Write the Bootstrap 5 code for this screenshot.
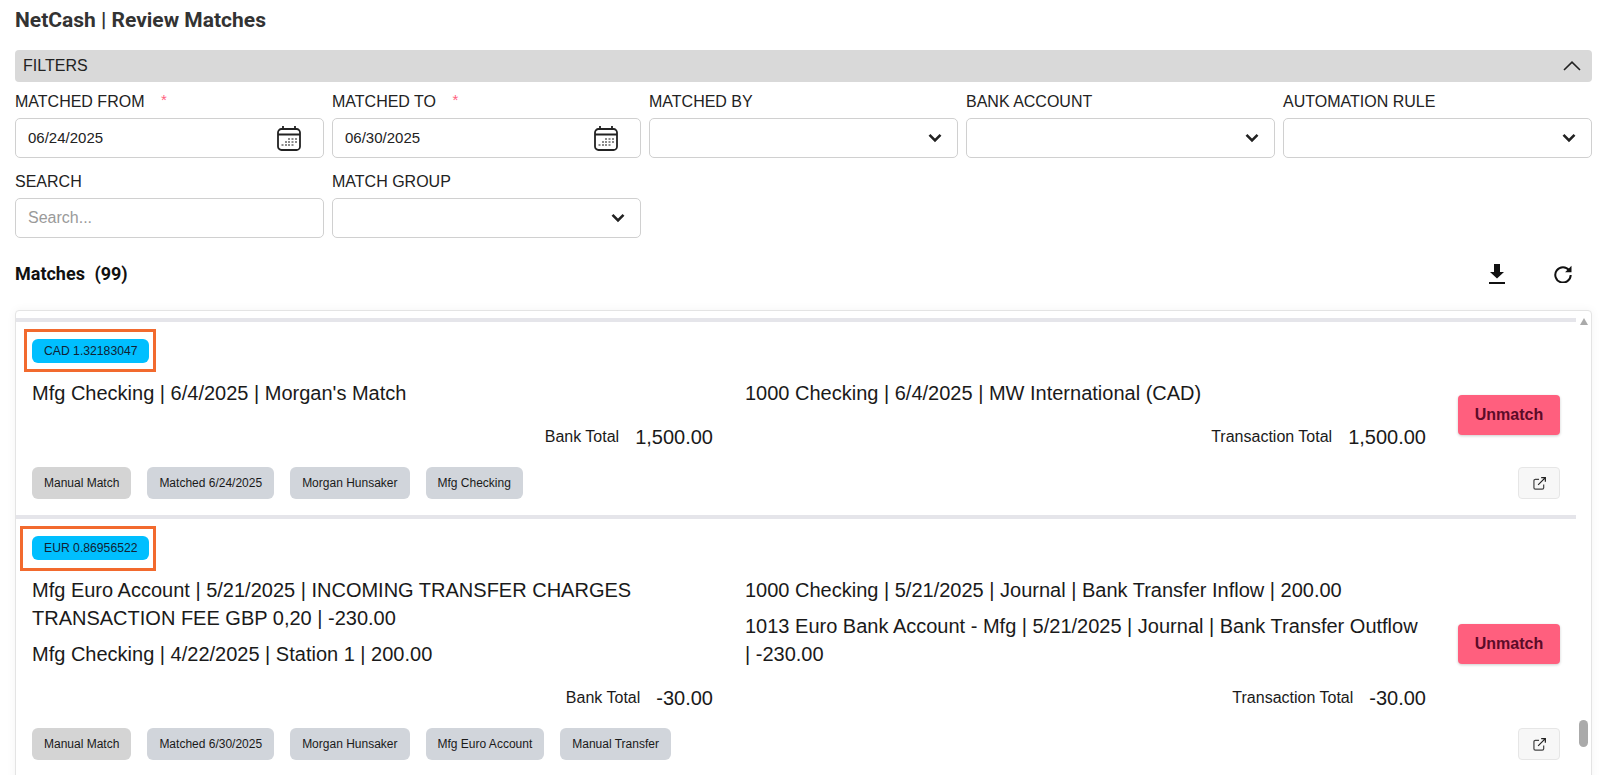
<!DOCTYPE html>
<html lang="en">
<head>
<meta charset="utf-8">
<title>NetCash | Review Matches</title>
<link href="https://cdn.jsdelivr.net/npm/bootstrap@5.3.0/dist/css/bootstrap.min.css" rel="stylesheet">
<style>
html,body{height:100%;overflow:hidden;background:#fff}
body{font-family:"Liberation Sans",Arial,sans-serif;color:#1a1a1a;padding:0 11px 0 15px}
.page-title{font-family:Roboto,"Liberation Sans",sans-serif;font-size:21px;font-weight:700;color:#333;height:40px;line-height:41px;margin:0 0 10px}
.filter-bar{height:32px;background:#d9d9d9;border-radius:4px;padding:0 11px 1px 8px;font-size:16px;color:#222}
.filter-grid{--bs-gutter-y:12px}
.field-label{display:block;font-size:16px;line-height:24px;margin:0 0 4px;color:#222;white-space:nowrap}
.req{color:#ff5f7e;margin-left:12px;font-size:15px;position:relative;top:-2px}
.field-box{position:relative}
.field-input,.field-input:focus{height:40px;border:1px solid #d0d0d0;border-radius:5px;font-size:15px;padding:0 12px 2px;color:#222;box-shadow:none}
.field-input::placeholder{color:#9a9a9a;font-size:16px}
.field-select,.field-select:focus{background-image:url("data:image/svg+xml,%3Csvg xmlns='http://www.w3.org/2000/svg' viewBox='0 0 14 10'%3E%3Cpath d='M1.5 1.8 7 7.5l5.5-5.7' fill='none' stroke='%23222' stroke-width='2.6'/%3E%3C/svg%3E");background-size:14px 10px;background-position:right 15px center}
.cal-icon{position:absolute;right:22px;top:6px;width:26px;height:28px}
.matches-bar{height:36px;margin:18px 0 18px}
.matches-title{font-family:Roboto,"Liberation Sans",sans-serif;font-size:18px;font-weight:700;color:#111;padding-bottom:2px}
.matches-title span{margin-left:5px}
.tool-btn{background:none;border:0;padding:0;line-height:0}
.tool-dl{margin-right:49px}
.tool-rf{margin-right:20px}
.scroll-pane{position:relative;height:600px;border:1px solid #e4e4e4;border-radius:4px;padding:7px 15px 0 0;box-shadow:0 0 10px rgba(0,0,0,.05);background:#fff;overflow:hidden}
.match-item{border-top:4px solid #e5e5ea;padding:17px 16px 16px 16px}
.rate-row{position:relative;height:24px;margin-bottom:16px}
.rate-pill{display:inline-block;width:117px;height:24px;line-height:24px;padding:0 12px;background:#00bfff;border-radius:6px;font-size:12.2px;color:#123;vertical-align:top;white-space:nowrap}
.anno-box{position:absolute;border:3px solid #f26a2e;pointer-events:none}
.anno-a{left:-8px;top:-10px;width:132px;height:43px}
.anno-b{left:-12px;top:-10px;width:136px;height:45px}
.match-body{display:flex;align-items:center;gap:32px;margin-bottom:16px}
.match-cols{flex:1 1 0;min-width:0;display:grid;grid-template-columns:1fr 1fr;column-gap:32px}
.match-col{display:flex;flex-direction:column}
.match-line{font-size:20px;line-height:28px;margin:0 0 8px;color:#1a1a1a}
.total-row{margin-top:auto;padding-top:8px;height:36px;gap:16px;font-size:16px}
.total-row b{font-weight:400;font-size:20px}
.unmatch-btn,.unmatch-btn:hover{width:102px;height:40px;padding:0;background:#ff5f7e;border:0;border-radius:4px;color:#5c0b28;font-weight:700;font-size:16px;box-shadow:0 1px 3px rgba(0,0,0,.2);flex:none}
.chip{display:inline-flex;align-items:center;height:32px;padding:0 12px;border-radius:6px;background:#d1d5db;font-size:12px;color:#1a1a1a;white-space:nowrap}
.chip-first{background:#d4d4d4}
.ext-btn,.ext-btn:hover{width:42px;height:32px;padding:0;display:flex;align-items:center;justify-content:center;background:#f7f7f7;border:1px solid #e6e6e6;border-radius:4px}
.bar-arrow{position:absolute;right:3px;top:7px;width:0;height:0;border-left:4.5px solid transparent;border-right:4.5px solid transparent;border-bottom:7px solid #aaa}
.bar-thumb{position:absolute;right:3px;top:409px;width:9px;height:27px;background:#aaa;border-radius:4.5px}
</style>
</head>
<body>
<h1 class="page-title">NetCash | Review Matches</h1>

<div class="filter-bar d-flex align-items-center justify-content-between">
  <span>FILTERS</span>
  <svg width="18" height="10" viewBox="0 0 18 10"><path d="M1 9 9 1.2 17 9" fill="none" stroke="#222" stroke-width="1.6"/></svg>
</div>

<div class="pt-2">
<div class="row row-cols-5 gx-2 filter-grid">
  <div class="col">
    <label class="field-label">MATCHED FROM <span class="req">*</span></label>
    <div class="field-box">
      <input class="form-control field-input" value="06/24/2025">
      <svg class="cal-icon" viewBox="0 0 26 28"><rect x="2" y="5" width="22" height="21" rx="3.5" fill="none" stroke="#222" stroke-width="1.8"/><path d="M2 10.5h22M7 2v4M19 2v4" fill="none" stroke="#222" stroke-width="1.8"/><path d="M12 15h2M15.500 15h2M19 15h2M9 18h2M12 18h2M15.500 18h2M19 18h2M5.500 21h2M9 21h2M12 21h2M15.500 21h2" stroke="#666" stroke-width="1.6"/></svg>
    </div>
  </div>
  <div class="col">
    <label class="field-label">MATCHED TO <span class="req">*</span></label>
    <div class="field-box">
      <input class="form-control field-input" value="06/30/2025">
      <svg class="cal-icon" viewBox="0 0 26 28"><rect x="2" y="5" width="22" height="21" rx="3.5" fill="none" stroke="#222" stroke-width="1.8"/><path d="M2 10.500h22M7 2v4M19 2v4" fill="none" stroke="#222" stroke-width="1.8"/><path d="M12 15h2M15.500 15h2M19 15h2M9 18h2M12 18h2M15.500 18h2M19 18h2M5.500 21h2M9 21h2M12 21h2M15.500 21h2" stroke="#666" stroke-width="1.6"/></svg>
    </div>
  </div>
  <div class="col">
    <label class="field-label">MATCHED BY</label>
    <select class="form-select field-input field-select"><option></option></select>
  </div>
  <div class="col">
    <label class="field-label">BANK ACCOUNT</label>
    <select class="form-select field-input field-select"><option></option></select>
  </div>
  <div class="col">
    <label class="field-label">AUTOMATION RULE</label>
    <select class="form-select field-input field-select"><option></option></select>
  </div>
  <div class="col">
    <label class="field-label">SEARCH</label>
    <input class="form-control field-input" placeholder="Search...">
  </div>
  <div class="col">
    <label class="field-label">MATCH GROUP</label>
    <select class="form-select field-input field-select"><option></option></select>
  </div>
</div>
</div>

<div class="matches-bar d-flex align-items-center justify-content-between">
  <div class="matches-title">Matches <span>(99)</span></div>
  <div class="d-flex align-items-center">
    <button class="tool-btn tool-dl" type="button" aria-label="Download">
      <svg width="16" height="20" viewBox="0 0 16 20"><path d="M5 0h6v8h4l-7 6.500L1 8h4z" fill="#111"/><path d="M0 18h16v2H0z" fill="#111"/></svg>
    </button>
    <button class="tool-btn tool-rf" type="button" aria-label="Refresh">
      <svg width="18" height="18" viewBox="0 0 18 18"><path d="M15.200 5.300A7.700 7.700 0 1 0 16.700 10" fill="none" stroke="#111" stroke-width="2"/><path d="M17.500 .8v6.400h-6.400z" fill="#111"/></svg>
    </button>
  </div>
</div>

<div class="scroll-pane">
  <div class="match-item">
    <div class="rate-row"><span class="rate-pill">CAD 1.32183047</span><span class="anno-box anno-a"></span></div>
    <div class="match-body">
      <div class="match-cols">
        <div class="match-col">
          <p class="match-line">Mfg Checking | 6/4/2025 | Morgan's Match</p>
          <div class="total-row d-flex align-items-center justify-content-end"><span>Bank Total</span><b>1,500.00</b></div>
        </div>
        <div class="match-col">
          <p class="match-line">1000 Checking | 6/4/2025 | MW International (CAD)</p>
          <div class="total-row d-flex align-items-center justify-content-end"><span>Transaction Total</span><b>1,500.00</b></div>
        </div>
      </div>
      <button class="btn unmatch-btn" type="button">Unmatch</button>
    </div>
    <div class="d-flex align-items-center justify-content-between">
      <div class="d-flex gap-3">
        <span class="chip chip-first">Manual Match</span>
        <span class="chip">Matched 6/24/2025</span>
        <span class="chip">Morgan Hunsaker</span>
        <span class="chip">Mfg Checking</span>
      </div>
      <button class="btn ext-btn" type="button" aria-label="Open">
        <svg width="13" height="13" viewBox="0 0 14 14"><path d="M6.500 2.500H2.500A1.500 1.500 0 0 0 1 4v7.500A1.500 1.500 0 0 0 2.500 13H10a1.500 1.500 0 0 0 1.500-1.500V8" fill="none" stroke="#444" stroke-width="1.3"/><path d="M5.500 8.500 13 1M8.800.7h4.500v4.500" fill="none" stroke="#222" stroke-width="1.3"/></svg>
      </button>
    </div>
  </div>

  <div class="match-item">
    <div class="rate-row"><span class="rate-pill">EUR 0.86956522</span><span class="anno-box anno-b"></span></div>
    <div class="match-body">
      <div class="match-cols">
        <div class="match-col">
          <p class="match-line">Mfg Euro Account | 5/21/2025 | INCOMING TRANSFER CHARGES TRANSACTION FEE GBP 0,20 | -230.00</p>
          <p class="match-line">Mfg Checking | 4/22/2025 | Station 1 | 200.00</p>
          <div class="total-row d-flex align-items-center justify-content-end"><span>Bank Total</span><b>-30.00</b></div>
        </div>
        <div class="match-col">
          <p class="match-line">1000 Checking | 5/21/2025 | Journal | Bank Transfer Inflow | 200.00</p>
          <p class="match-line">1013 Euro Bank Account - Mfg | 5/21/2025 | Journal | Bank Transfer Outflow | -230.00</p>
          <div class="total-row d-flex align-items-center justify-content-end"><span>Transaction Total</span><b>-30.00</b></div>
        </div>
      </div>
      <button class="btn unmatch-btn" type="button">Unmatch</button>
    </div>
    <div class="d-flex align-items-center justify-content-between">
      <div class="d-flex gap-3">
        <span class="chip chip-first">Manual Match</span>
        <span class="chip">Matched 6/30/2025</span>
        <span class="chip">Morgan Hunsaker</span>
        <span class="chip">Mfg Euro Account</span>
        <span class="chip">Manual Transfer</span>
      </div>
      <button class="btn ext-btn" type="button" aria-label="Open">
        <svg width="13" height="13" viewBox="0 0 14 14"><path d="M6.500 2.500H2.500A1.500 1.500 0 0 0 1 4v7.500A1.500 1.500 0 0 0 2.500 13H10a1.500 1.500 0 0 0 1.500-1.500V8" fill="none" stroke="#444" stroke-width="1.3"/><path d="M5.500 8.500 13 1M8.800.7h4.500v4.500" fill="none" stroke="#222" stroke-width="1.3"/></svg>
      </button>
    </div>
  </div>
  <span class="bar-arrow"></span>
  <span class="bar-thumb"></span>
</div>
<script src="https://cdn.jsdelivr.net/npm/bootstrap@5.3.0/dist/js/bootstrap.bundle.min.js"></script>
</body>
</html>
